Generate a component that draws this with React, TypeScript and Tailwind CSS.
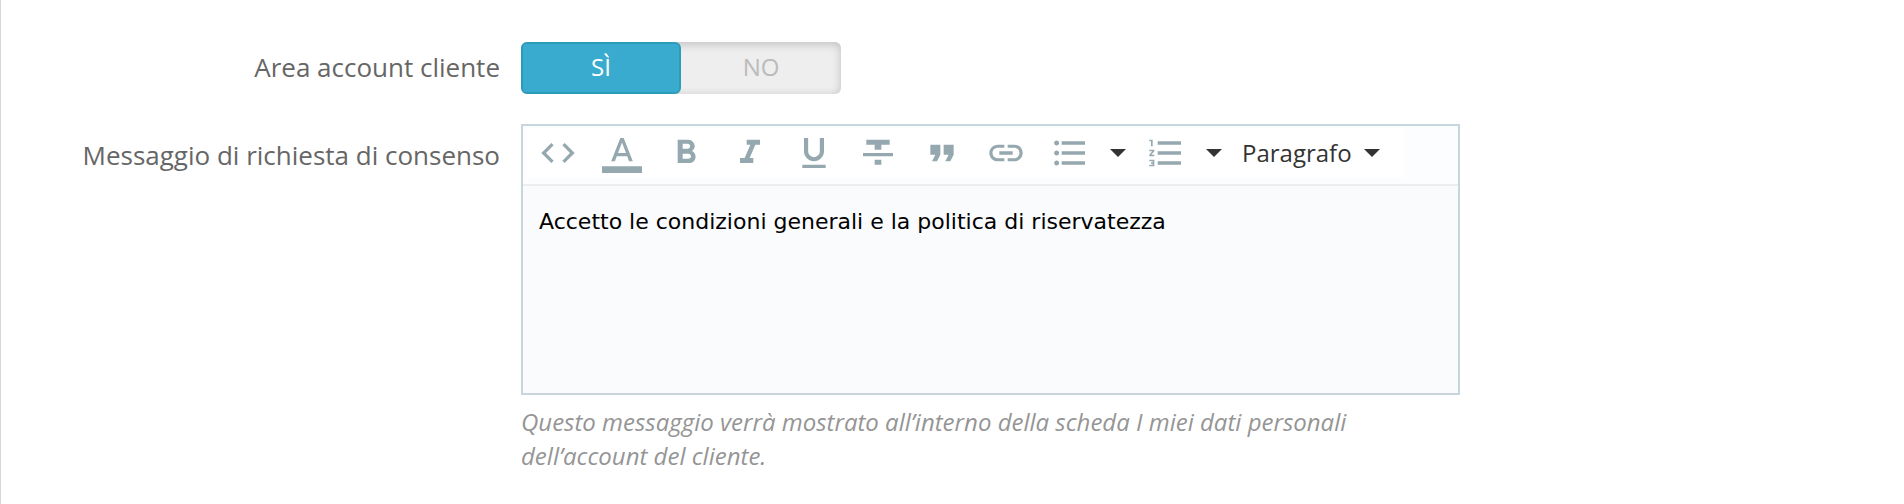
import React, { useState } from 'react';
import {
  MdCode,
  MdFormatBold,
  MdFormatItalic,
  MdFormatListBulleted,
  MdFormatListNumbered,
  MdFormatQuote,
  MdFormatUnderlined,
} from 'react-icons/md';

const TextColorIcon: React.FC = () => (
  <svg viewBox="0 0 24 24" fill="currentColor" className="size-10">
    <path d="M0 20h24v4H0z" />
    <path d="M11 3L5.5 17h2.25l1.12-3h6.25l1.12 3h2.25L13 3h-2zm-1.38 9L12 5.67 14.38 12H9.62z" />
  </svg>
);

const StrikeIcon: React.FC = () => (
  <svg viewBox="0 0 24 24" fill="currentColor" className="size-10">
    <path d="M10 19h4v-3h-4v3zM5 4v3h5v3h4V7h5V4H5zM3 14h18v-2H3v2z" />
  </svg>
);

const LinkIcon: React.FC = () => (
  <svg viewBox="0 0 24 24" fill="currentColor" className="size-10">
    <path d="M3.9 12c0-1.71 1.39-3.1 3.1-3.1h4V7H7c-2.76 0-5 2.24-5 5s2.24 5 5 5h4v-1.9H7c-1.71 0-3.1-1.39-3.1-3.1zM8 13h8v-2H8v2zm9-6h-4v1.9h4c1.71 0 3.1 1.39 3.1 3.1s-1.39 3.1-3.1 3.1h-4V17h4c2.76 0 5-2.24 5-5s-2.24-5-5-5z" />
  </svg>
);

const Caret: React.FC = () => (
  <svg viewBox="0 0 16 8" fill="currentColor" className="h-2 w-4 text-[#333333]">
    <path d="M0 0h16L8 8z" />
  </svg>
);

const tools = [
  { name: 'Codice sorgente', icon: <MdCode className="size-10" /> },
  { name: 'Colore testo', icon: <TextColorIcon /> },
  { name: 'Grassetto', icon: <MdFormatBold className="size-10" /> },
  { name: 'Corsivo', icon: <MdFormatItalic className="size-10" /> },
  { name: 'Sottolineato', icon: <MdFormatUnderlined className="size-10" /> },
  { name: 'Barrato', icon: <StrikeIcon /> },
  { name: 'Citazione', icon: <MdFormatQuote className="size-10" /> },
  { name: 'Inserisci link', icon: <LinkIcon /> },
];

const lists = [
  { name: 'Elenco puntato', icon: <MdFormatListBulleted className="size-10" /> },
  { name: 'Elenco numerato', icon: <MdFormatListNumbered className="size-10" /> },
];

const Toolbar: React.FC = () => (
  <div className="flex border-b-2 border-[#ebeef0] bg-[#fcfdff] pt-0.5 pb-1.5 pl-[3px]">
    <div className="flex h-[50px] items-center bg-white pr-6 text-[#95a8af]">
      {tools.map((tool) => (
        <button key={tool.name} type="button" aria-label={tool.name} className="flex h-12 w-16 items-center justify-center">
          {tool.icon}
        </button>
      ))}
      {lists.map((list) => (
        <div key={list.name} className="flex">
          <button type="button" aria-label={list.name} className="flex h-12 w-16 items-center justify-center">
            {list.icon}
          </button>
          <button type="button" aria-label={`${list.name}, opzioni`} className="flex h-12 w-8 items-center justify-center">
            <Caret />
          </button>
        </div>
      ))}
      <button type="button" className="flex h-12 items-center gap-3 pl-3 text-2xl text-[#333333]">
        Paragrafo
        <Caret />
      </button>
    </div>
  </div>
);

const App: React.FC = () => {
  const [enabled, setEnabled] = useState(true);
  const [message, setMessage] = useState('Accetto le condizioni generali e la politica di riservatezza');

  return (
    <div className="min-h-screen border-l border-[#d3d8db] bg-white pt-[42px] font-['Open_Sans',sans-serif] text-[#666666]">
      <form className="grid grid-cols-[499fr_939fr_423fr] gap-x-[21px] gap-y-[30px]">
        {/* Customer account switch */}
        <div id="area-label" className="pt-2 text-right text-[26px] leading-[34px]">
          Area account cliente
        </div>
        <div className="col-span-2">
          <div
            role="radiogroup"
            aria-labelledby="area-label"
            className="relative flex h-13 w-80 rounded-md bg-[#eeeeee] text-center text-2xl text-[#bbbbbb] shadow-[inset_0_2px_10px_rgba(0,0,0,0.2)]"
          >
            <label className="flex flex-1 items-center justify-center rounded-md border-2 border-transparent pb-0.5 has-checked:border-[#2f9bbb] has-checked:bg-[#39abce] has-checked:text-white">
              <input type="radio" name="area" className="sr-only" checked={enabled} onChange={() => setEnabled(true)} />
              SÌ
            </label>
            <label className="flex flex-1 items-center justify-center rounded-md border-2 border-transparent pb-0.5 has-checked:border-[#2f9bbb] has-checked:bg-[#39abce] has-checked:text-white">
              <input type="radio" name="area" className="sr-only" checked={!enabled} onChange={() => setEnabled(false)} />
              NO
            </label>
          </div>
        </div>

        {/* Consent message editor */}
        <label htmlFor="message" className="pt-[14px] text-right text-[26px] leading-[34px]">
          Messaggio di richiesta di consenso
        </label>
        <div>
          <div className="border-2 border-[#c7d6db] bg-white">
            <Toolbar />
            <textarea
              id="message"
              value={message}
              onChange={(e) => setMessage(e.target.value)}
              className="block h-[207px] w-full resize-none bg-[#fafbfd] px-4 py-5 font-['DejaVu_Sans',sans-serif] text-[22px] leading-8 text-black outline-none"
            />
          </div>
          <p className="mt-2.5 text-2xl leading-[34px] text-[#959595] italic">
            Questo messaggio verrà mostrato all’interno della scheda I miei dati personali dell’account del cliente.
          </p>
        </div>
      </form>
    </div>
  );
};

export default App;
